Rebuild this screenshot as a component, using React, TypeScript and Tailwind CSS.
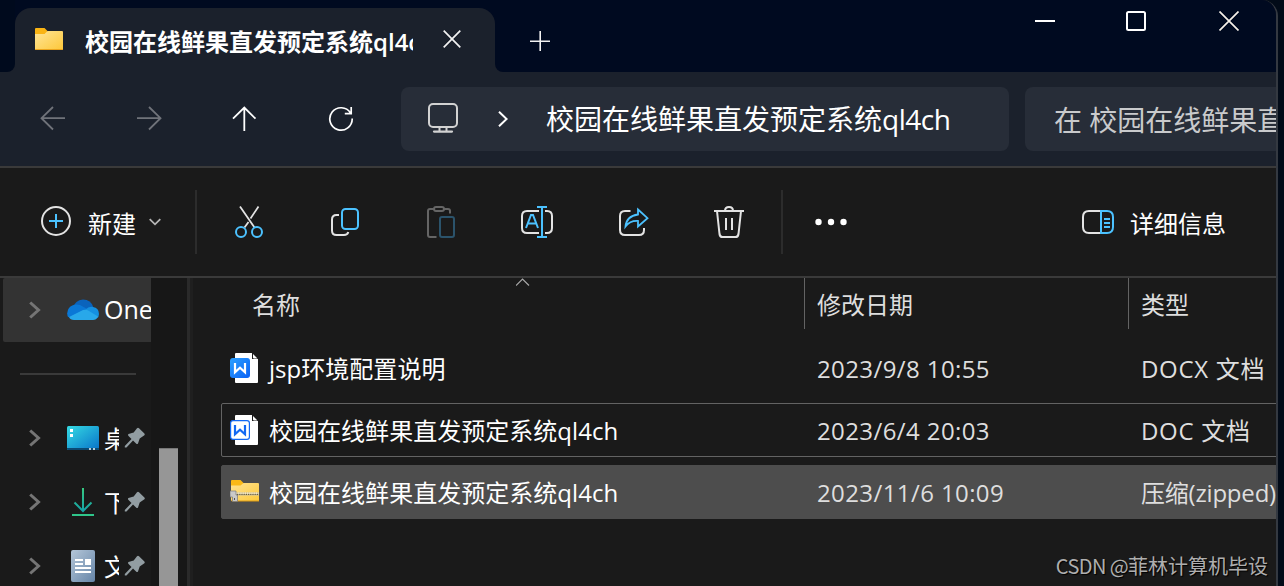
import React from 'react';
import { clsx } from 'clsx';

const FileIcon = ({ type }: { type: string }) => {
  if (type === 'zip') {
    return (
      <svg width="30" height="30" viewBox="230 477 30 30" className="shrink-0">
        <defs>
          <linearGradient id="zip" x1="0" y1="0" x2="1" y2="1">
            <stop offset="0" stopColor="#ffe394" />
            <stop offset="1" stopColor="#fdc93a" />
          </linearGradient>
        </defs>
        <path d="M231 481q0-1 1-1h8.500l3 3v4H231z" fill="#fbb917" />
        <path d="M231 485.500h9.500l3-2.500H258q1 0 1 1v17H232q-1 0-1-1z" fill="url(#zip)" />
        <path d="M231 500.500h28v1H232z" fill="#e09b13" />
        <path d="M236 494h23" stroke="#d6c388" strokeWidth="3.400" />
        <path d="M236 493.200h22.500" stroke="#f1eee6" strokeWidth="1.200" strokeDasharray="1.200 1" />
        <path d="M237 494.500h21.500" stroke="#5f5b52" strokeWidth="1.100" strokeDasharray="1.200 1" />
        <path d="M230 491h6v4h1.500v6.500h-5V497H230z" fill="#c9c9c9" stroke="#777" strokeWidth=".7" />
        <path d="M234.500 498v2" stroke="#555" />
      </svg>
    );
  }
  const solid = type === 'docx';
  return (
    <svg width="30" height="32" viewBox="230 352 30 32" className="shrink-0">
      <defs>
        <linearGradient id="word" x1="0" y1="0" x2="1" y2="1">
          <stop offset="0" stopColor="#2b9fff" />
          <stop offset="1" stopColor="#0a62f5" />
        </linearGradient>
      </defs>
      <path d="M236 353h16v6h6v23q0 1-1 1h-21q-1 0-1-1v-28q0-1 1-1z" fill="#fff" />
      <path d="M253 354l4.500 4.500h-3.500q-1 0-1-1z" fill="#fff" />
      <rect x="230.600" y="358.600" width="18.800" height="18.800" rx="2.400" fill={solid ? 'url(#word)' : '#fff'} stroke={solid ? 'url(#word)' : '#1268f3'} strokeWidth="1.200" />
      <path d="M235 363v9.200l5-4.500 5 4.500V363" fill="none" stroke={solid ? '#fff' : '#1268f3'} strokeWidth="2.200" />
    </svg>
  );
};

const Pin = () => (
  <svg width="22" height="22" viewBox="0 0 22 22" className="ml-[5px] shrink-0">
    <path d="M13 1.200q1-.9 2 0l5.400 5.200q.8 1 0 1.900l-4.700 3.200-1.700 5q-.8 1-1.700.2L9 13.500 2.500 20.500H.8V19L7.500 12 4.300 8.700q-.7-1 .2-1.600l5.200-1.700z" fill="#929da2" />
  </svg>
);

const Chevron = () => (
  <svg width="12" height="18" viewBox="0 0 12 18" className="ml-[26px] shrink-0">
    <path d="M1.200 1.500L9.500 9l-8.300 7.500" fill="none" stroke="#757575" strokeWidth="3" />
  </svg>
);

const places = [
  {
    name: '桌面',
    icon: (
      <svg width="32" height="32" viewBox="0 0 32 32">
        <defs>
          <linearGradient id="desk" x1="0" y1="0" x2="1" y2="1">
            <stop offset="0" stopColor="#35dbe3" />
            <stop offset="1" stopColor="#0872c9" />
          </linearGradient>
        </defs>
        <rect y="4" width="32" height="24" rx="1.500" fill="url(#desk)" />
        <path d="M0 26h32v.5q0 1.500-1.500 1.500h-29Q0 28 0 26.500z" fill="#0b4a72" />
        <path d="M3 7h3v3H3zM3 12h3v3H3z" fill="#fff" />
        <path d="M22 26h2v2h-2zM26 26h2v2h-2z" fill="#b8cbd8" />
      </svg>
    ),
  },
  {
    name: '下载',
    icon: (
      <svg width="32" height="32" viewBox="0 0 32 32" fill="none" strokeWidth="2">
        <defs>
          <linearGradient id="down" gradientUnits="userSpaceOnUse" x1="0" y1="2" x2="0" y2="26">
            <stop offset="0" stopColor="#37c981" />
            <stop offset="1" stopColor="#14a0a8" />
          </linearGradient>
        </defs>
        <path d="M16 2v23M7.500 16.500l8.500 8.500 8.500-8.500" stroke="url(#down)" />
        <path d="M5 29h22" stroke="#2fc58a" />
      </svg>
    ),
  },
  {
    name: '文档',
    icon: (
      <svg width="32" height="32" viewBox="0 0 32 32">
        <defs>
          <linearGradient id="docs" x1="0" y1="0" x2="1" y2="1">
            <stop offset="0" stopColor="#b4c6d8" />
            <stop offset="1" stopColor="#6685a8" />
          </linearGradient>
        </defs>
        <rect x="4" width="24" height="32" rx="2" fill="url(#docs)" />
        <path d="M8 9h8v2H8zM8 13h8v2H8zM18 9h6v6h-6zM8 17h16v2H8zM8 21h16v2H8z" fill="#fff" />
      </svg>
    ),
  },
];

const files = [
  { name: 'jsp环境配置说明', date: '2023/9/8 10:55', kind: 'DOCX 文档', type: 'docx' },
  { name: '校园在线鲜果直发预定系统ql4ch', date: '2023/6/4 20:03', kind: 'DOC 文档', type: 'doc' },
  { name: '校园在线鲜果直发预定系统ql4ch', date: '2023/11/6 10:09', kind: '压缩(zipped)文件夹', type: 'zip' },
];

const TitleBar = () => (
  <div className="flex h-[72px] bg-[#000a20]">
    <div className="flex w-[15px] bg-[#1b212c]">
      <div className="w-full rounded-br-lg bg-[#000a1d]" />
    </div>
    <div className="flex w-[480px] bg-[#1b212c] [clip-path:inset(8px_0_0_0_round_16px_16px_0_0)]">
      <svg width="28" height="24" viewBox="0 0 28 24" className="mt-[27px] ml-5 shrink-0">
        <defs>
          <linearGradient id="folder" x1="0" y1="0" x2="1" y2="1">
            <stop offset="0" stopColor="#ffe597" />
            <stop offset="1" stopColor="#fdc739" />
          </linearGradient>
        </defs>
        <path d="M0 2q0-1 1-1h8.500l3 3-1 4H0z" fill="#fab414" />
        <path d="M0 7h9.500l3-3H27q1 0 1 1v17q0 1-1 1H1q-1 0-1-1z" fill="url(#folder)" />
        <path d="M0 22h28q0 1-1 1H1q-1 0-1-1z" fill="#eba41c" />
      </svg>
      <div className="mt-[23px] ml-[22px] h-9 w-[328px] overflow-hidden text-2xl leading-[37px] font-bold whitespace-nowrap text-white">
        校园在线鲜果直发预定系统<span className="font-semibold">ql4c</span>
      </div>
      <svg width="18" height="18" viewBox="0 0 18 18" className="mt-[30px] ml-[30px] shrink-0" stroke="#f2f2f2" strokeWidth="1.700">
        <path d="M.7.700l16.600 16.600M17.300.700L.7 17.300" />
      </svg>
    </div>
    <div className="flex flex-1 bg-[#1b212c]">
      <div className="flex w-full rounded-bl-lg bg-[#000a20]">
        <svg width="20" height="20" viewBox="0 0 20 20" className="mt-[31px] ml-[35px]" stroke="#f2f2f2" strokeWidth="1.600">
          <path d="M0 10.200h20M10.200 0v20" />
        </svg>
        <div className="mt-[11px] mr-[37px] ml-auto flex h-5 gap-[71px]">
          <svg width="20" height="20" viewBox="0 0 20 20">
            <path d="M0 10h20" stroke="#fff" strokeWidth="2" />
          </svg>
          <svg width="20" height="20" viewBox="0 0 20 20">
            <rect x="1" y="1" width="18" height="18" rx="1.500" fill="none" stroke="#fff" strokeWidth="2" />
          </svg>
          <svg width="20" height="20" viewBox="0 0 20 20" className="ml-0.5">
            <path d="M.5.500l19 19M19.500.500l-19 19" stroke="#f5f0e8" strokeWidth="1.700" />
          </svg>
        </div>
      </div>
    </div>
  </div>
);

const NavBar = () => (
  <div className="flex h-[94px] bg-[#1b212c] pt-[15px] pl-10">
    <div className="mt-[19px] flex w-[361px] gap-[70px]">
      <svg width="26" height="26" viewBox="0 0 26 26" fill="none" stroke="#70737a" strokeWidth="1.800">
        <path d="M25 12.200H1.500M13 1L1.500 12.200 13 23.500" />
      </svg>
      <svg width="26" height="26" viewBox="0 0 26 26" fill="none" stroke="#70737a" strokeWidth="1.800">
        <path d="M1 12.200h23.500M13 1l11.500 11.200L13 23.500" />
      </svg>
      <svg width="26" height="26" viewBox="0 0 26 26" fill="none" stroke="#fff" strokeWidth="1.800">
        <path d="M12.300 25V1.500M1 12.700L12.300 1.500l11.200 11.200" />
      </svg>
      <svg width="26" height="26" viewBox="0 0 26 26" fill="none" stroke="#fff" strokeWidth="1.700">
        <path d="M22.500 7A11.200 11.200 0 1 0 24.200 12.500M23.200 1v6.600h-6.400" />
      </svg>
    </div>
    <div className="flex h-16 w-[608px] shrink-0 rounded-lg bg-[#272d38]">
      <svg width="32" height="32" viewBox="0 0 32 32" className="mt-[15px] ml-[26px]" fill="none" stroke="#d2d2d2" strokeWidth="2">
        <rect x="2" y="2" width="28" height="23" rx="4" />
        <path d="M12.500 25v4M19.500 25v4" />
        <path d="M7 29.600h18" strokeWidth="2.200" strokeLinecap="round" />
      </svg>
      <svg width="10" height="16" viewBox="0 0 10 16" className="mt-6 ml-[39px]" fill="none" stroke="#fff" strokeWidth="2">
        <path d="M1 .8L8.600 8 1 15.200" />
      </svg>
      <span className="ml-[38px] text-[28px] leading-[64px] text-white">
        校园在线鲜果直发预定系统<span className="tracking-[-0.5px]">ql4ch</span>
      </span>
    </div>
    <div className="ml-4 h-16 flex-1 overflow-hidden rounded-l-lg bg-[#272d38] pl-[29px] text-[28px] leading-[66px] whitespace-nowrap text-[#c9cacc]">
      在 校园在线鲜果直
    </div>
  </div>
);

const Toolbar = () => (
  <div className="flex h-[108px] items-center bg-[#1a1a1a] pl-10">
    <svg width="32" height="32" viewBox="40 206 32 32" fill="none" strokeWidth="2">
      <circle cx="56" cy="221" r="14" stroke="#e3e3e3" />
      <path d="M49 221h14M56 214v14" stroke="#4cc2ff" />
    </svg>
    <span className="ml-4 w-[49px] pt-[3px] text-2xl whitespace-nowrap text-white">新建</span>
    <svg width="12" height="8" viewBox="0 0 12 8" className="ml-3" fill="none" stroke="#b5b5b5" strokeWidth="1.800">
      <path d="M.7 1.200L6 6.300l5.300-5.100" />
    </svg>
    <div className="ml-[34px] h-16 w-0.5 bg-[#2c2c2c]" />
    <div className="ml-9 flex gap-16">
      <svg width="32" height="32" viewBox="233 206 32 32" fill="none" strokeWidth="2">
        <path d="M240 206.500l14.500 21M258.500 206.500l-8 12M248.500 222l-4 5.500" stroke="#e3e3e3" strokeWidth="1.800" />
        <circle cx="241" cy="232" r="5" stroke="#4cc2ff" />
        <circle cx="257" cy="232" r="5" stroke="#4cc2ff" />
      </svg>
      <svg width="32" height="32" viewBox="329 206 32 32" fill="none" strokeWidth="2">
        <path d="M339 215h-2.500q-4.500 0-4.500 4.500v11q0 4.500 4.500 4.500h7.500q3.500 0 4.300-3" stroke="#e3e3e3" />
        <rect x="342" y="209" width="16" height="20" rx="3.500" stroke="#4cc2ff" />
      </svg>
      <svg width="32" height="32" viewBox="425 206 32 32" fill="none" strokeWidth="2">
        <path d="M434 209h-4q-2 0-2 2v24q0 2 2 2h6.500M444 209h4q2 0 2 2v2.500" stroke="#656565" />
        <rect x="434" y="207" width="10" height="4" rx="2" stroke="#656565" />
        <rect x="440" y="217" width="14" height="20" rx="2" stroke="#2b536b" />
      </svg>
      <svg width="32" height="32" viewBox="521 206 32 32" fill="none" strokeWidth="2">
        <path d="M539 211h-12q-5 0-5 5v12q0 5 5 5h12M545 211h2q5 0 5 5v12q0 5-5 5h-2" stroke="#e3e3e3" />
        <path d="M537 207h10M537 237h10M542 207v30M526 228l5-13h2l5 13M528 223.500h8" stroke="#4cc2ff" />
      </svg>
      <svg width="32" height="32" viewBox="617 206 32 32" fill="none" strokeWidth="2">
        <path d="M630.500 211H625q-5 0-5 5v14q0 5 5 5h14q5 0 5-5v-2" stroke="#e3e3e3" />
        <path d="M638 209.500l9.500 8.700-9.500 8.300v-5.500q-8-.5-12.500 5.500 1-10.500 12.500-12z" stroke="#4cc2ff" strokeWidth="1.800" />
      </svg>
      <svg width="32" height="32" viewBox="713 206 32 32" fill="none" stroke="#e3e3e3" strokeWidth="2">
        <path d="M714 211h30M725 211q0-4 4-4t4 4M717 211l2.500 23q.4 3 3 3h13q2.600 0 3-3l2.500-23M726 218v12M732 218v12" />
      </svg>
    </div>
    <div className="ml-9 h-16 w-0.5 bg-[#2c2c2c]" />
    <svg width="36" height="8" viewBox="0 0 36 8" className="ml-[31px]" fill="#fff">
      <circle cx="4.500" cy="4" r="3.200" />
      <circle cx="17" cy="4" r="3.200" />
      <circle cx="29.500" cy="4" r="3.200" />
    </svg>
    <svg width="32" height="32" viewBox="1082 206 32 32" className="mr-4 ml-auto" fill="none" strokeWidth="2">
      <path d="M1101 211h-12q-6 0-6 6v10q0 6 6 6h12" stroke="#e3e3e3" />
      <path d="M1101 211h6q6 0 6 6v10q0 6-6 6h-6zM1104 219h6M1104 223h6M1104 227h6" stroke="#4cc2ff" />
    </svg>
    <span className="mr-[50px] w-24 pt-[3px] text-2xl whitespace-nowrap text-white">详细信息</span>
  </div>
);

const Sidebar = () => (
  <div className="flex w-[193px] shrink-0 pl-[3px]">
    <div className="w-[148px] shrink-0 text-[25px] text-white">
      <div className="flex h-16 items-center overflow-hidden rounded-l-xs bg-[#333333]">
        <Chevron />
        <svg width="32" height="22" viewBox="0 0 32 22" className="ml-[26px] shrink-0">
          <path d="M6 9Q8 1 16 .500q8 0 10.500 8L17 16z" fill="#0a63bc" />
          <path d="M1 18Q-1 13 2 9q4-5 11-3l9 5-12 8z" fill="#0a78d6" />
          <path d="M18 11q4-4 8-3 6 1 6 7 0 3-2 4z" fill="#1590e0" />
          <path d="M2 18l14-7q3-1 6 1l9 5.500q-1.500 3.500-5 3.500H7q-4 0-5-3z" fill="#28a8ea" />
        </svg>
        <span className="ml-[5px]">One</span>
      </div>
      <div className="flex h-16 items-center pl-[17px]">
        <div className="h-0.5 w-[116px] bg-[#3a3a3a]" />
      </div>
      {places.map((place) => (
        <div key={place.name} className="flex h-16 items-center">
          <Chevron />
          <div className="ml-[26px] shrink-0">{place.icon}</div>
          <span className="ml-[5px] w-[15px] shrink-0 overflow-hidden pt-px text-2xl whitespace-nowrap">{place.name}</span>
          <Pin />
        </div>
      ))}
    </div>
    <div className="w-9 bg-[#171717] pt-[170px] pl-2">
      <div className="h-40 w-[19px] border-t border-[#777] bg-[#969696]" />
    </div>
    <div className="w-1.5 border-l-[3px] border-[#2a2a2a] bg-[#1f1f1f]" />
  </div>
);

const FileList = () => (
  <div className="relative flex-1 overflow-hidden pl-7">
    <div className="flex h-[51px] w-[1200px] text-2xl leading-[54px] text-[#dedede]">
      <span className="w-[583px] pl-[31px]">名称</span>
      <span className="w-[324px] border-l border-[#636363] pl-3">修改日期</span>
      <span className="border-l border-[#636363] pl-3">类型</span>
    </div>
    {/* sort direction */}
    <svg width="14" height="8" viewBox="0 0 14 8" className="absolute top-0 left-[323px]" fill="none" stroke="#a8a8a8" strokeWidth="1.200">
      <path d="M0 7.500L6.500 1l6.500 6.500" />
    </svg>
    <div className="mt-3 flex w-[1200px] flex-col gap-2">
      {files.map((file) => (
        <div
          key={file.date}
          className={clsx(
            'flex h-[54px] items-center rounded-xs border pl-2 text-2xl',
            file.type === 'docx' && 'border-transparent',
            file.type === 'doc' && 'border-[#636363]',
            file.type === 'zip' && 'border-[#4d4d4d] bg-[#4d4d4d]'
          )}
        >
          <FileIcon type={file.type} />
          <span className="ml-[9px] w-[548px] pt-0.5 tracking-[0.03px] text-white">{file.name}</span>
          <span className="w-[324px] pt-px tracking-[0.4px] text-[#dedede]">{file.date}</span>
          <span className={clsx('pt-0.5 whitespace-nowrap text-[#dedede]', file.type === 'zip' ? 'tracking-[-0.2px]' : 'tracking-[0.7px]')}>
            {file.kind}
          </span>
        </div>
      ))}
    </div>
    <div className="absolute right-2 bottom-[5px] font-['Noto_Sans_CJK_SC',sans-serif] text-xl leading-[30px] text-[#aeaeae] [text-shadow:1px_1px_1px_#000]">
      <span className="tracking-[-0.6px]">CSDN @</span>菲林计算机毕设
    </div>
  </div>
);

export default function App() {
  return (
    <div className="h-[586px] w-[1284px] overflow-hidden bg-[#020b18] font-['Open_Sans','Noto_Sans_CJK_SC',sans-serif]">
      <div className="flex h-full w-[1278px] flex-col overflow-hidden rounded-tr-2xl border-r-2 border-[#343941] bg-[#1a1a1a]">
        <TitleBar />
        <NavBar />
        <div className="h-0.5 shrink-0 bg-[#3a3a3a]" />
        <Toolbar />
        <div className="h-0.5 shrink-0 bg-[#3a3a3a]" />
        <div className="flex min-h-0 flex-1">
          <Sidebar />
          <FileList />
        </div>
      </div>
    </div>
  );
}
